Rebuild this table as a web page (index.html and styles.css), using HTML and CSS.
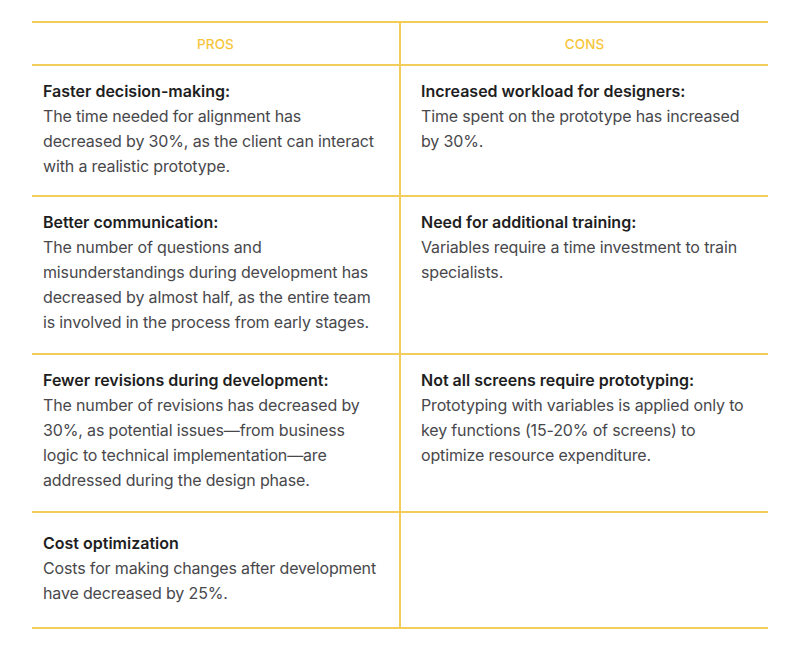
FILE: index.html
```html
<!DOCTYPE html>
<html lang="en">
<head>
<meta charset="utf-8">
<link rel="stylesheet" href="styles.css">
</head>
<body>
<div class="table">
  <div class="cell head left">PROS</div>
  <div class="cell head">CONS</div>

  <div class="cell row1 left">
    <div class="title">Faster decision-making:</div>
    <div class="text">The time needed for alignment has decreased by 30%, as the client can interact with a realistic prototype.</div>
  </div>
  <div class="cell row1 right">
    <div class="title">Increased workload for designers:</div>
    <div class="text">Time spent on the prototype has increased by 30%.</div>
  </div>

  <div class="cell row2 left">
    <div class="title">Better communication:</div>
    <div class="text">The number of questions and misunderstandings during development has decreased by almost half, as the entire team is involved in the process from early stages.</div>
  </div>
  <div class="cell row2 right">
    <div class="title">Need for additional training:</div>
    <div class="text">Variables require a time investment to train specialists.</div>
  </div>

  <div class="cell row3 left">
    <div class="title">Fewer revisions during development:</div>
    <div class="text">The number of revisions has decreased by 30%, as potential issues—from business logic to technical implementation—are addressed during the design phase.</div>
  </div>
  <div class="cell row3 right">
    <div class="title">Not all screens require prototyping:</div>
    <div class="text">Prototyping with variables is applied only to key functions (15-20% of screens) to optimize resource expenditure.</div>
  </div>

  <div class="cell row4 left">
    <div class="title">Cost optimization</div>
    <div class="text">Costs for making changes after development have decreased by 25%.</div>
  </div>
  <div class="cell row4 right"></div>
</div>
</body>
</html>
```

FILE: styles.css
```css
html, body {
  margin: 0;
  padding: 0;
  background: #ffffff;
}

body {
  font-family: Inter, "Noto Sans", sans-serif;
  padding: 21px 32px 0 32px;
}

.table {
  width: 736px;
  display: grid;
  grid-template-columns: 369px 367px;
  border-top: 2px solid #f3cd5a;
}

.cell {
  border-bottom: 2px solid #f3cd5a;
  padding: 13px 20px 16px 11px;
}

.cell.left {
  border-right: 2px solid #f3cd5a;
}

.cell.right {
  padding-left: 20px;
  padding-right: 12px;
}

.cell.head {
  height: 41px;
  padding: 0;
  display: flex;
  align-items: center;
  justify-content: center;
  font-size: 13.5px;
  font-weight: 500;
  color: #f6c53b;
  letter-spacing: 0.1px;
}

.row2, .row3 {
  padding-bottom: 18px;
}

.row4 {
  padding-top: 18px;
  padding-bottom: 21px;
}

.title {
  font-size: 16px;
  line-height: 25px;
  font-weight: 600;
  color: #1e1e22;
}

.text {
  font-size: 16px;
  line-height: 25px;
  font-weight: 400;
  color: #48484c;
  letter-spacing: -0.15px;
}
```
